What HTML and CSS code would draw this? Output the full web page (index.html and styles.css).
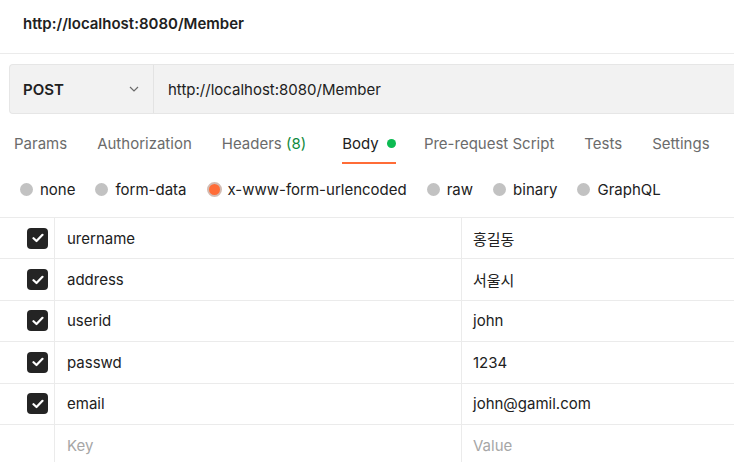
FILE: index.html
```html
<!DOCTYPE html>
<html lang="ko">
<head>
<meta charset="utf-8">
<link rel="stylesheet" href="styles.css">
</head>
<body>
<header class="title-bar"><h1 class="title">http://localhost:8080/Member</h1></header>

<div class="url-bar">
  <div class="method">
    <span class="method-name">POST</span>
    <svg class="chev" width="12" height="12" viewBox="0 0 12 12"><path d="M2 4 L6 8 L10 4" fill="none" stroke="#6b6b6b" stroke-width="1.2"/></svg>
  </div>
  <div class="url">http://localhost:8080/Member</div>
</div>

<nav class="tabs">
  <span class="tab">Params</span>
  <span class="tab">Authorization</span>
  <span class="tab">Headers <span class="count">(8)</span></span>
  <span class="tab active">Body <span class="dot"></span></span>
  <span class="tab">Pre-request Script</span>
  <span class="tab">Tests</span>
  <span class="tab">Settings</span>
</nav>

<div class="radios">
  <label class="radio"><span class="circle"></span>none</label>
  <label class="radio"><span class="circle"></span>form-data</label>
  <label class="radio"><span class="circle on"></span>x-www-form-urlencoded</label>
  <label class="radio"><span class="circle"></span>raw</label>
  <label class="radio"><span class="circle"></span>binary</label>
  <label class="radio"><span class="circle"></span>GraphQL</label>
</div>

<div class="table">
  <div class="row">
    <div class="cell chk"><span class="box"><svg width="12" height="10" viewBox="0 0 12 10"><path d="M1.5 5.2 L4.5 8 L10.5 1.8" fill="none" stroke="#fff" stroke-width="2.2" stroke-linecap="round" stroke-linejoin="round"/></svg></span></div>
    <div class="cell key">urername</div>
    <div class="cell val">홍길동</div>
  </div>
  <div class="row">
    <div class="cell chk"><span class="box"><svg width="12" height="10" viewBox="0 0 12 10"><path d="M1.5 5.2 L4.5 8 L10.5 1.8" fill="none" stroke="#fff" stroke-width="2.2" stroke-linecap="round" stroke-linejoin="round"/></svg></span></div>
    <div class="cell key">address</div>
    <div class="cell val">서울시</div>
  </div>
  <div class="row">
    <div class="cell chk"><span class="box"><svg width="12" height="10" viewBox="0 0 12 10"><path d="M1.5 5.2 L4.5 8 L10.5 1.8" fill="none" stroke="#fff" stroke-width="2.2" stroke-linecap="round" stroke-linejoin="round"/></svg></span></div>
    <div class="cell key">userid</div>
    <div class="cell val">john</div>
  </div>
  <div class="row">
    <div class="cell chk"><span class="box"><svg width="12" height="10" viewBox="0 0 12 10"><path d="M1.5 5.2 L4.5 8 L10.5 1.8" fill="none" stroke="#fff" stroke-width="2.2" stroke-linecap="round" stroke-linejoin="round"/></svg></span></div>
    <div class="cell key">passwd</div>
    <div class="cell val">1234</div>
  </div>
  <div class="row">
    <div class="cell chk"><span class="box"><svg width="12" height="10" viewBox="0 0 12 10"><path d="M1.5 5.2 L4.5 8 L10.5 1.8" fill="none" stroke="#fff" stroke-width="2.2" stroke-linecap="round" stroke-linejoin="round"/></svg></span></div>
    <div class="cell key">email</div>
    <div class="cell val">john@gamil.com</div>
  </div>
  <div class="row">
    <div class="cell chk"></div>
    <div class="cell key ph">Key</div>
    <div class="cell val ph">Value</div>
  </div>
</div>
</body>
</html>
```

FILE: styles.css
```css
* { box-sizing: border-box; }
html, body { margin: 0; padding: 0; background: #fff; overflow: hidden; }
body {
  width: 734px;
  height: 462px;
  font-family: Inter, "Noto Sans CJK KR", "Noto Sans", sans-serif;
  font-size: 15px;
  color: #212121;
}

.title-bar {
  height: 54px;
  padding: 14px 0 0 23px;
  border-bottom: 1px solid #ebebeb;
}
.title {
  margin: 0;
  font-size: 15px;
  font-weight: 600;
  line-height: 20px;
  color: #212121;
}

.url-bar {
  display: flex;
  height: 50px;
  margin: 10px 0 0 9px;
  background: #f2f2f2;
  border: 1px solid #e6e6e6;
  border-right: none;
  border-radius: 4px 0 0 4px;
}
.method {
  width: 144px;
  display: flex;
  align-items: center;
  padding-left: 13px;
  padding-right: 13px;
  border-right: 1px solid #e3e3e3;
}
.method-name { font-weight: 600; flex: 1; }
.chev { display: block; }
.url {
  display: flex;
  align-items: center;
  padding-left: 14px;
  color: #212121;
}

.tabs {
  display: flex;
  gap: 30px;
  height: 50px;
  padding: 0 0 0 14px;
  align-items: stretch;
}
.tab {
  display: flex;
  align-items: center;
  padding-top: 11px;
  color: #6b6b6b;
  border-bottom: 2px solid transparent;
  white-space: pre;
}
.tab .count { color: #0f8a3e; }
.tab.active { color: #212121; border-bottom-color: #ff6c37; margin-left: 6px; margin-right: -2px; }
.dot {
  width: 9px; height: 9px; border-radius: 50%;
  background: #0cbb52;
  margin-left: 4px;
}

.radios {
  display: flex;
  gap: 20px;
  align-items: center;
  height: 53px;
  padding-left: 20px;
  padding-bottom: 3px;
}
.radio {
  display: flex;
  align-items: center;
  gap: 7px;
  color: #212121;
}
.circle {
  width: 13px; height: 13px; border-radius: 50%;
  background: #c2c2c2;
}
.circle.on {
  width: 15px; height: 15px;
  background: #ff6c37;
  border: 2px solid #d3bcb3;
  margin-right: -1px;
}

.table {
  border-top: 1px solid #ebebeb;
}
.row {
  display: grid;
  grid-template-columns: 55px 407px 1fr;
  height: 41.4px;
  border-bottom: 1px solid #ebebeb;
}
.cell {
  display: flex;
  align-items: center;
  border-right: 1px solid #ebebeb;
}
.cell.chk { justify-content: flex-end; padding-right: 6px; }
.cell.key { padding-left: 12px; }
.cell.val { padding-left: 11px; border-right: none; }
.cell.ph { color: #a6a6a6; }
.box {
  width: 21px; height: 21px;
  border-radius: 4px;
  background: #242424;
  display: flex;
  align-items: center;
  justify-content: center;
}
.box svg { display: block; }
```
